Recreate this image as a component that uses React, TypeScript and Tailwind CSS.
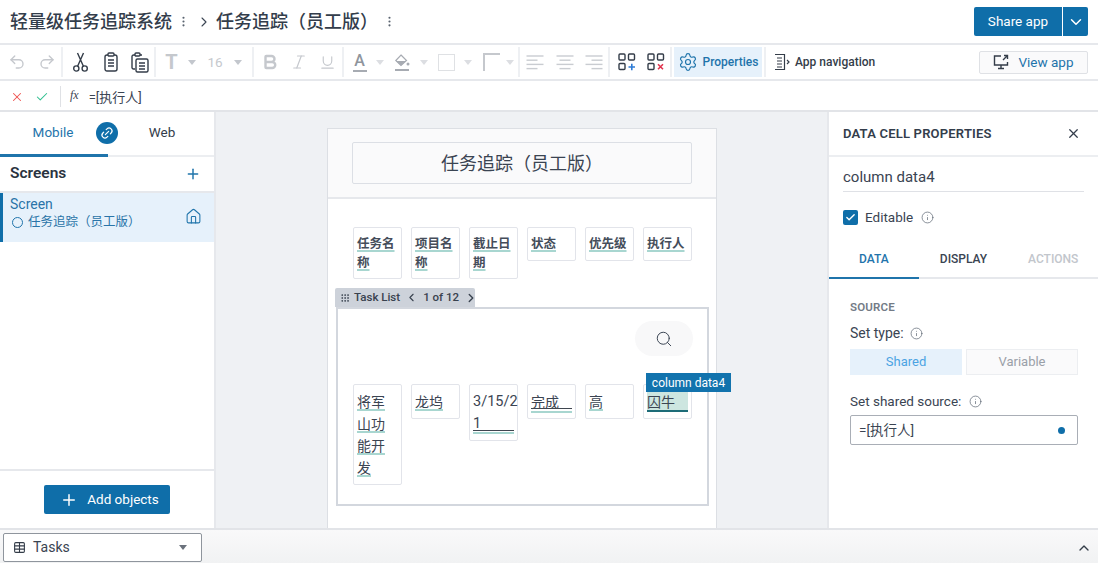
import React from "react";
import { Undo2, Redo2, Bold, Italic, Underline, X, Check, Plus, Home, Link2, ChevronDown, ChevronUp, ChevronLeft, ChevronRight, Search, Info, Settings, Table, Grip, MoreVertical } from "lucide-react";

const font = "font-['Roboto','Noto_Sans_CJK_SC',sans-serif]";
const Sep = () => <div className="w-[2px] h-[30px] bg-[#eef0f3] shrink-0" />;
const Tri = ({ c = "border-t-[#c3c7cd]" }: { c?: string }) => (
  <span className={`block w-0 h-0 border-l-[4px] border-r-[4px] border-t-[5px] border-l-transparent border-r-transparent ${c}`} />
);
const Slot = ({ w, children }: { w: string; children: React.ReactNode }) => (
  <div className={`${w} h-full flex items-center justify-center shrink-0`}>{children}</div>
);
const Lines = ({ a }: { a: "l" | "c" | "r" }) => {
  const rows = [0, 1, 2, 3];
  const w = [17, 11, 17, 11];
  return (
    <svg width="18" height="15" viewBox="0 0 18 15" stroke="#c9ccd1" strokeWidth="1.4">
      {rows.map((r) => {
        const x = a === "l" ? 0.5 : a === "c" ? 9 - w[r] / 2 : 17.5 - w[r];
        return <line key={r} x1={x} x2={x + w[r]} y1={1 + r * 4.2} y2={1 + r * 4.2} />;
      })}
    </svg>
  );
};

const Cell = ({ h, children }: { h: string; children: React.ReactNode }) => (
  <div className={`relative w-[49px] ${h} border border-[#e2e4ea] rounded-[2px] bg-white pl-[3px] pr-[3px] shrink-0`}>{children}</div>
);
const ul = "underline decoration-[#a8d6d0] decoration-2 underline-offset-[2px] [text-decoration-skip-ink:none]";

function Head({ t, h }: { t: string; h: string }) {
  return (
    <Cell h={h}>
      <div className={`pt-[6px] text-[12.5px] leading-[19px] font-bold text-[#454d5a] ${ul}`}>{t}</div>
    </Cell>
  );
}
function Data({ t, h }: { t: string; h: string }) {
  return (
    <Cell h={h}>
      <div className={`pt-[6px] text-[14px] leading-[22px] text-[#3b4452] ${ul}`}>{t}</div>
    </Cell>
  );
}

export default function App() {
  return (
    <div className={`w-[1098px] h-[563px] overflow-hidden bg-white flex flex-col text-[#3a4452] ${font}`}>
      {/* title bar */}
      <div className="h-[45px] shrink-0 border-b-2 border-[#e6e8ec] flex items-center pl-[10px] pr-[10px]">
        <span className="mt-[1px] text-[18px] font-medium text-[#333d4b] leading-none">轻量级任务追踪系统</span>
        <MoreVertical size={13} strokeWidth={2} className="ml-[5px] text-[#5a6470]" />
        <ChevronRight size={16} strokeWidth={1.6} className="ml-[6px] text-[#3a4452]" />
        <span className="mt-[1px] ml-[4px] text-[18px] font-medium text-[#333d4b] leading-none">任务追踪（员工版）</span>
        <MoreVertical size={13} strokeWidth={2} className="ml-[5px] text-[#5a6470]" />
        <div className="ml-auto flex h-[29px] rounded-[2px] overflow-hidden text-white">
          <div className="w-[88px] bg-[#0f6ea9] flex items-center justify-center text-[13.5px]">Share app</div>
          <div className="w-[25px] ml-px bg-[#0f6ea9] flex items-center justify-center"><ChevronDown size={18} strokeWidth={2} /></div>
        </div>
      </div>
      {/* toolbar */}
      <div className="h-[36px] shrink-0 border-b-2 border-[#e6e8ec] flex items-center text-[#c5c8cd]">
        <Slot w="w-[31px] ml-px"><Undo2 size={18} strokeWidth={1.8} /></Slot>
        <Slot w="w-[29px]"><Redo2 size={18} strokeWidth={1.8} /></Slot>
        <Sep />
        <Slot w="w-[32px] ml-px">
          <svg width="15" height="20" viewBox="0 0 15 20" fill="none" stroke="#343d49" strokeWidth="1.4"><circle cx="3.3" cy="16.5" r="2.6" /><circle cx="11.7" cy="16.5" r="2.6" /><path d="M4.6 14.2 L10.5 1 M10.4 14.2 L4.5 1" /></svg>
        </Slot>
        <Slot w="w-[29px] text-[#343d49]">
          <svg width="14" height="20" viewBox="0 0 14 20" fill="none" stroke="#343d49" strokeWidth="1.4"><rect x="1" y="3" width="12" height="16" rx="2" /><rect x="4" y="1" width="6" height="3" rx="1" fill="#fff" /><path d="M4 8h6M4 11h6M4 14h6" /></svg>
        </Slot>
        <Slot w="w-[29px]">
          <svg width="18" height="21" viewBox="0 0 18 21" fill="none" stroke="#343d49" strokeWidth="1.4"><path d="M4 17H2.5A1.5 1.5 0 0 1 1 15.5V4.5A1.5 1.5 0 0 1 2.5 3H11" /><rect x="4" y="1" width="5" height="3" rx="1" fill="#fff" /><rect x="5" y="7" width="12" height="13" rx="1.5" fill="#fff" /><path d="M8 11h6M8 14h6M8 17h6" /></svg>
        </Slot>
        <Sep />
        <Slot w="w-[31px]"><span className="text-[20px] font-bold text-[#c5c8cd] leading-none">T</span></Slot>
        <Slot w="w-[10px]"><Tri /></Slot>
        <Slot w="w-[36px]"><span className="text-[13.5px] text-[#c5c8cd]">16</span></Slot>
        <Slot w="w-[10px]"><Tri /></Slot>
        <Slot w="w-[9px]"><span /></Slot>
        <Sep />
        <Slot w="w-[29px] ml-[1px]"><Bold size={18} strokeWidth={3.2} /></Slot>
        <Slot w="w-[29px]"><Italic size={18} strokeWidth={1.6} /></Slot>
        <Slot w="w-[29px]"><Underline size={17} strokeWidth={1.6} /></Slot>
        <Sep />
        <Slot w="w-[31px]"><span className="flex flex-col items-center leading-none"><span className="text-[16px] text-[#8f959d] font-medium leading-[15px]">A</span><span className="w-[14px] h-[2px] bg-[#a7abb2] mt-[2px]" /></span></Slot>
        <Slot w="w-[10px]"><Tri c="border-t-[#dcdee2]" /></Slot>
        <Slot w="w-[34px]"><span className="flex flex-col items-center"><svg width="16" height="13" viewBox="0 0 16 13" fill="none"><path d="M7 1 L12.5 6.5 L7 11.5 L1.8 6.5 Z" stroke="#a7abb2" strokeWidth="1.2" /><path d="M2 7h10L7 11.5z" fill="#a7abb2" /><circle cx="14" cy="10" r="1.5" fill="#a7abb2" /></svg><span className="w-[14px] h-[2px] bg-[#a7abb2] mt-[2px]" /></span></Slot>
        <Slot w="w-[10px]"><Tri c="border-t-[#dcdee2]" /></Slot>
        <Slot w="w-[34px]"><span className="w-[17px] h-[17px] border border-[#dfe1e4]" /></Slot>
        <Slot w="w-[10px]"><Tri c="border-t-[#dcdee2]" /></Slot>
        <Slot w="w-[36px]"><span className="w-[17px] h-[18px] border-l-2 border-t-2 border-[#c5c8cd]" /></Slot>
        <Slot w="w-[10px] -ml-[4px]"><Tri c="border-t-[#dcdee2]" /></Slot>
        <Slot w="w-[3px]"><span /></Slot>
        <Sep />
        <Slot w="w-[30px]"><Lines a="l" /></Slot>
        <Slot w="w-[29px]"><Lines a="c" /></Slot>
        <Slot w="w-[29px]"><Lines a="r" /></Slot>
        <Sep />
        <Slot w="w-[29px] ml-[2px]">
          <svg width="18" height="18" viewBox="0 0 18 18" fill="none" stroke="#343d49" strokeWidth="1.4"><rect x="1" y="1" width="6" height="6" rx="1" /><rect x="10.5" y="1" width="6" height="6" rx="1" /><rect x="1" y="10.5" width="6" height="6" rx="1" /><path d="M10.5 14h6.5M13.8 10.8v6.5" stroke="#2e7cd6" strokeWidth="1.6" /></svg>
        </Slot>
        <Slot w="w-[29px]">
          <svg width="18" height="18" viewBox="0 0 18 18" fill="none" stroke="#343d49" strokeWidth="1.4"><rect x="1" y="1" width="6" height="6" rx="1" /><rect x="10.5" y="1" width="6" height="6" rx="1" /><rect x="1" y="10.5" width="6" height="6" rx="1" /><path d="M11 11.2l5 5M16 11.2l-5 5" stroke="#e0344e" strokeWidth="1.6" /></svg>
        </Slot>
        <Sep />
        <div className="ml-[2px] w-[88px] h-[30px] bg-[#e6f1fb] flex items-center justify-center gap-[5px] text-[#1f74ab] text-[12px] font-medium shrink-0">
          <Settings size={20} strokeWidth={1.4} />Properties
        </div>
        <div className="ml-[2px] w-[2px] h-[30px] bg-[#eef0f3] shrink-0" />
        <div className="ml-[8px] flex items-center gap-[5px] text-[12px] font-medium text-[#343d49]">
          <svg width="16" height="18" viewBox="0 0 16 18" fill="none" stroke="#343d49" strokeWidth="1.2"><path d="M1 1.5h9.5v15H1M3 5h5M3 8h5M3 11h5M3 14h5" /><path d="M13 7l2 2-2 2" /></svg>
          App navigation
        </div>
        <div className="ml-auto mr-[10px] w-[109px] h-[23px] border border-[#dfe1e5] rounded-[2px] bg-[#fafafb] flex items-center justify-center gap-[9px] text-[13.5px] text-[#1f74ab]">
          <svg width="16" height="16" viewBox="0 0 16 16" fill="none" stroke="#343d49" strokeWidth="1.4"><path d="M8 2H1.5v9h13V8" /><path d="M8 11v3M5 14.5h6" /><path d="M10 6l4.5-4.5M11 1.5h3.5V5" /></svg>
          View app
        </div>
      </div>
      {/* formula bar */}
      <div className="h-[31px] shrink-0 border-b-2 border-[#e2e4e8] flex items-center pt-[3px]">
        <X size={14} strokeWidth={1.8} className="ml-[10px] text-[#ef5350]" />
        <Check size={14} strokeWidth={1.8} className="ml-[11px] text-[#2fbf8f]" />
        <div className="ml-[11px] w-[1px] h-[21px] bg-[#dfe1e5] -mt-[2px]" />
        <span className="ml-[9px] text-[12px] italic font-['Liberation_Serif',serif] text-[#3a4452] -mt-[4px]">fx</span>
        <span className="ml-[10px] mt-[1px] text-[13px] text-[#3a4452]">=[执行人]</span>
      </div>
      {/* main */}
      <div className="flex-1 min-h-0 flex">
        {/* left */}
        <div className="w-[216px] shrink-0 border-r-2 border-[#e6e8ec] flex flex-col">
          <div className="h-[45px] border-b-2 border-[#eceef1] flex text-[13.5px] relative">
            <div className="w-[108px] -mb-[2px] border-b-[3px] border-[#1f74ab] text-[#1f74ab] flex items-center justify-center pb-[2px] -indent-[2px]">Mobile</div>
            <div className="flex-1 flex items-center justify-center pb-[2px] pl-[2px] text-[#333d4b]">Web</div>
            <div className="absolute left-[96px] top-[10px] w-[22px] h-[22px] rounded-full bg-[#0f6ea9] flex items-center justify-center text-white"><Link2 size={14} className="-rotate-45" /></div>
          </div>
          <div className="h-[36px] border-b-2 border-[#e6e8ec] flex items-center justify-between pl-[10px] pr-[13px]">
            <span className="text-[15.5px] font-semibold text-[#2a3340]">Screens</span>
            <Plus size={16} strokeWidth={2.2} className="text-[#1f74ab]" />
          </div>
          <div className="h-[49px] bg-[#e6f1fb] border-l-[3px] border-[#0f6ea9] flex items-center justify-between pl-[7px] pr-[12px] text-[#2a74a8]">
            <div className="text-[12.5px] leading-[18px] pb-[9px]">
              <div className="text-[14px]">Screen</div>
              <div className="flex items-center gap-[5px]"><span className="w-[11px] h-[11px] rounded-full border border-[#1f74ab] ml-[2px]" />任务追踪（员工版）</div>
            </div>
            <Home size={17} strokeWidth={1.5} className="text-[#1f74ab] -mt-[3px]" />
          </div>
          <div className="flex-1" />
          <div className="h-[59px] border-t-2 border-[#e6e8ec] flex justify-center pt-[14px]">
            <div className="w-[126px] h-[29px] bg-[#0f6ea9] rounded-[2px] flex items-center justify-center gap-[9px] pl-[5px] text-white text-[13.5px]">
              <Plus size={18} strokeWidth={2} />Add objects
            </div>
          </div>
        </div>
        {/* canvas area */}
        <div className="flex-1 min-w-0 bg-[#eff1f4] flex justify-center pt-[16px] pl-px overflow-hidden">
          <div className="w-[390px] h-[420px] shrink-0 bg-white border border-[#dcdfe4] border-b-0 flex flex-col">
            <div className="h-[70px] shrink-0 bg-[#fafafb] border-b-2 border-[#e6e8ec] flex justify-center pt-[13px]">
              <div className="w-[340px] h-[42px] border border-[#dcdfe5] rounded-[2px] flex items-center justify-center text-[18px] text-[#3a4452]">任务追踪（员工版）</div>
            </div>
            <div className="pl-[25px] pt-[28px] h-[89px] flex gap-[9px] items-start shrink-0">
              <Head t="任务名称" h="h-[52px]" />
              <Head t="项目名称" h="h-[52px]" />
              <Head t="截止日期" h="h-[52px]" />
              <Head t="状态" h="h-[34px]" />
              <Head t="优先级" h="h-[34px]" />
              <Head t="执行人" h="h-[34px]" />
            </div>
            <div className="ml-[7px] self-start w-[140px] h-[19px] pl-[5px] bg-[#cdd2da] rounded-t-[2px] flex items-center text-[11.5px] font-medium text-[#39424f] shrink-0 whitespace-nowrap">
              <Grip size={10} className="mr-[4px] shrink-0" />Task List
              <ChevronLeft size={13} className="ml-[5px] shrink-0" />
              <span className="mx-[5px]">1 of 12</span>
              <ChevronRight size={14} strokeWidth={2.4} className="shrink-0" />
            </div>
            <div className="relative ml-[8px] w-[373px] h-[199px] border-2 border-[#d3d7de] pl-[15px] shrink-0">
              <div className="flex justify-end pr-[14px] pt-[12px] h-[75px]">
                <div className="w-[58px] h-[35px] rounded-full bg-[#f8f8f9] flex items-center justify-center"><Search size={18} strokeWidth={1.3} /></div>
              </div>
              <div className="flex gap-[9px] items-start">
                <Data t="将军山功能开发" h="h-[101px]" />
                <Data t="龙坞" h="h-[35px]" />
                <Cell h="h-[57px]">
                  <div className="pt-[6px] text-[14.5px] leading-[22px] text-[#3b4452]">3/15/2<br />1</div>
                  <div className="absolute left-[3px] right-[3px] bottom-[9px] border-b border-[#3f4650]" />
                  <div className="absolute left-[3px] right-[3px] bottom-[6px] h-[2px] bg-[#a8d6d0]" />
                </Cell>
                <Cell h="h-[35px]">
                  <div className="pt-[6px] text-[14px] leading-[22px] text-[#3b4452]">完成</div>
                  <div className="absolute left-[3px] right-[3px] bottom-[9px] border-b border-[#3f4650]" />
                  <div className="absolute left-[3px] right-[3px] bottom-[5px] h-[2px] bg-[#a8d6d0]" />
                </Cell>
                <Data t="高" h="h-[35px]" />
                <Cell h="h-[35px]">
                  <div className="absolute left-[3px] top-[7px] w-[41px] h-[20px] bg-[#cde6e0] border-b-2 border-[#1d6c78]" />
                  <div className="relative pt-[6px] text-[14px] leading-[22px] text-[#3b4452]">囚牛</div>
                </Cell>
              </div>
              <div className="absolute left-[308px] top-[64px] w-[85px] h-[19px] bg-[#1273ad] text-white text-[12px] flex items-center justify-center">column data4</div>
            </div>
          </div>
        </div>
        {/* right */}
        <div className="w-[271px] shrink-0 border-l-2 border-[#e6e8ec] flex flex-col text-[#3a4452]">
          <div className="h-[45px] shrink-0 border-b-2 border-[#eceef1] flex items-center justify-between pl-[14px] pr-[17px]">
            <span className="text-[13px] font-semibold tracking-[0.2px] text-[#333d4b]">DATA CELL PROPERTIES</span>
            <X size={15} strokeWidth={2} className="text-[#333d4b]" />
          </div>
          <div className="ml-[14px] mr-[14px] h-[35px] border-b border-[#dfe1e6] flex items-end pb-[4px] text-[15px] leading-[20px]">column data4</div>
          <div className="ml-[14px] mt-[15px] h-[20px] flex items-center text-[13.5px]">
            <span className="w-[15px] h-[15px] rounded-[2px] bg-[#0f6ea9] flex items-center justify-center text-white"><Check size={11} strokeWidth={3} /></span>
            <span className="ml-[7px]">Editable</span>
            <Info size={13} strokeWidth={1.3} className="ml-[8px] text-[#5a6470]" />
          </div>
          <div className="mt-[14px] h-[38px] shrink-0 border-b-2 border-[#e6e8ec] flex text-[12px] font-medium">
            <div className="w-[90px] -mb-[2px] border-b-2 border-[#1f74ab] text-[#1f74ab] flex items-center justify-center">DATA</div>
            <div className="w-[90px] flex items-center justify-center">DISPLAY</div>
            <div className="w-[90px] flex items-center justify-center text-[#c2c6cc]">ACTIONS</div>
          </div>
          <div className="pl-[21px] pr-[19px]">
            <div className="mt-[21px] text-[11.5px] font-semibold tracking-[0.2px] text-[#737b86] leading-[14px]">SOURCE</div>
            <div className="mt-[11px] flex items-center text-[14px] leading-[16px]">Set type:<Info size={13} strokeWidth={1.3} className="ml-[6px] text-[#5a6470]" /></div>
            <div className="mt-[8px] flex gap-[4px] text-[13px]">
              <div className="w-[112px] h-[26px] bg-[#e6f1fb] text-[#4ba3e3] flex items-center justify-center">Shared</div>
              <div className="w-[112px] h-[26px] bg-[#fafafb] border border-[#eceef1] text-[#9aa0a8] flex items-center justify-center">Variable</div>
            </div>
            <div className="mt-[18px] flex items-center text-[13.5px] leading-[16px]">Set shared source:<Info size={13} strokeWidth={1.3} className="ml-[8px] text-[#5a6470]" /></div>
            <div className="mt-[6px] w-[228px] h-[30px] border border-[#a9aeb6] rounded-[2px] flex items-center justify-between pl-[8px] pr-[12px] text-[13.5px]">
              =[执行人]<span className="w-[7px] h-[7px] rounded-full bg-[#0f6ea9]" />
            </div>
          </div>
        </div>
      </div>
      {/* bottom */}
      <div className="h-[35px] shrink-0 border-t-2 border-[#e2e4e8] bg-gradient-to-b from-[#f9f9fa] to-[#f1f2f3] flex items-center pl-[3px] pr-[6px] pt-[2px]">
        <div className="w-[199px] h-[29px] border border-[#8f959d] rounded-[2px] bg-white flex items-center pl-[9px] pr-[14px] text-[14px]">
          <Table size={13} strokeWidth={2} className="mr-[7px] text-[#343d49]" />Tasks
          <span className="ml-auto"><Tri c="border-t-[#6b727c]" /></span>
        </div>
        <ChevronUp size={16} strokeWidth={2} className="ml-auto text-[#343d49]" />
      </div>
    </div>
  );
}
